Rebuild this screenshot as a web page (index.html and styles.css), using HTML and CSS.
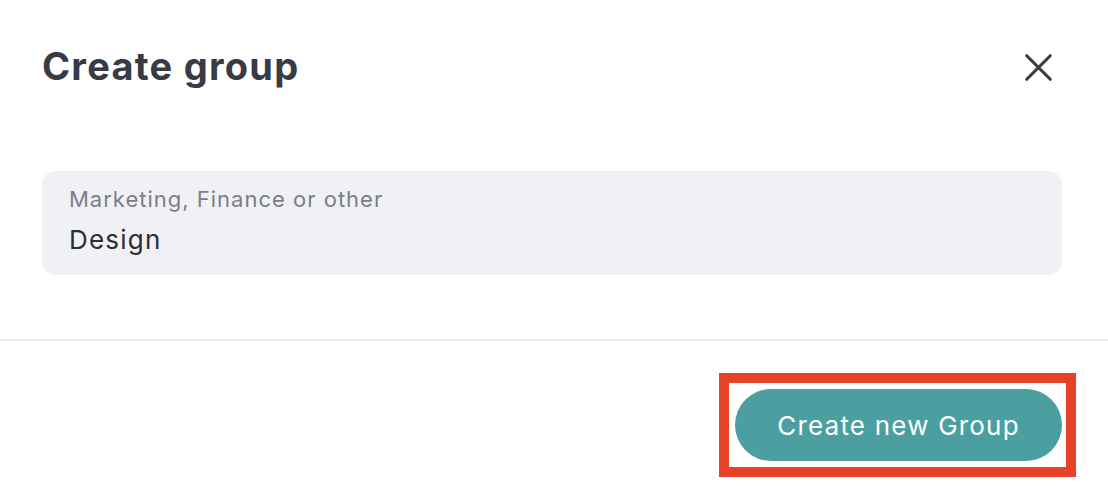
FILE: index.html
```html
<!DOCTYPE html>
<html lang="en">
<head>
<meta charset="utf-8">
<title>Create group</title>
<link rel="stylesheet" href="styles.css">
</head>
<body>
<div class="modal">
  <div class="header">
    <h1 class="title">Create group</h1>
    <button class="close" aria-label="Close">
      <svg width="32" height="32" viewBox="0 0 32 32" fill="none" stroke="#383a44" stroke-width="3.4" stroke-linecap="round">
        <path d="M3 3 L29 29 M29 3 L3 29"/>
      </svg>
    </button>
  </div>
  <div class="body">
    <div class="field">
      <div class="field-label">Marketing, Finance or other</div>
      <div class="field-value">Design</div>
    </div>
  </div>
  <div class="divider"></div>
  <div class="footer">
    <span class="highlight">
      <button class="primary">Create new Group</button>
    </span>
  </div>
</div>
</body>
</html>
```
FILE: styles.css
```css
html, body {
  margin: 0;
  padding: 0;
  background: #ffffff;
  font-family: Inter, "Noto Sans", "Liberation Sans", sans-serif;
}

.modal {
  width: 1108px;
  height: 500px;
  box-sizing: border-box;
}

.header {
  display: flex;
  align-items: center;
  justify-content: space-between;
  padding: 44px 54px 0 42px;
}

.title {
  margin: 0;
  font-size: 38px;
  line-height: 44px;
  font-weight: 700;
  letter-spacing: 1.25px;
  color: #383a44;
}

.close {
  width: 32px;
  height: 32px;
  padding: 0;
  margin-top: 2px;
  border: none;
  background: none;
  display: flex;
  align-items: center;
  justify-content: center;
}

.close svg {
  width: 29px;
  height: 29px;
}

.body {
  padding: 83px 46px 0 42px;
}

.field {
  background: #f0f1f5;
  border-radius: 14px;
  height: 104px;
  box-sizing: border-box;
  padding: 15px 27px 0 27px;
}

.field-label {
  font-size: 22px;
  line-height: 26px;
  letter-spacing: 1px;
  color: #7c7e88;
}

.field-value {
  margin-top: 12px;
  font-size: 26px;
  line-height: 32px;
  letter-spacing: 1.2px;
  color: #2c2e36;
}

.divider {
  margin-top: 64px;
  height: 2px;
  background: #ebebef;
}

.footer {
  display: flex;
  justify-content: flex-end;
  padding: 32px 32px 0 0;
}

.highlight {
  display: inline-flex;
  border: 10px solid #e8412a;
  padding: 6px 4px 6px 6px;
}

.primary {
  width: 327px;
  height: 72px;
  border: none;
  border-radius: 36px;
  background: #4b9fa1;
  color: #ffffff;
  font-family: Inter, "Noto Sans", "Liberation Sans", sans-serif;
  font-size: 26px;
  font-weight: 400;
  letter-spacing: 1.2px;
  padding: 0;
}
```
